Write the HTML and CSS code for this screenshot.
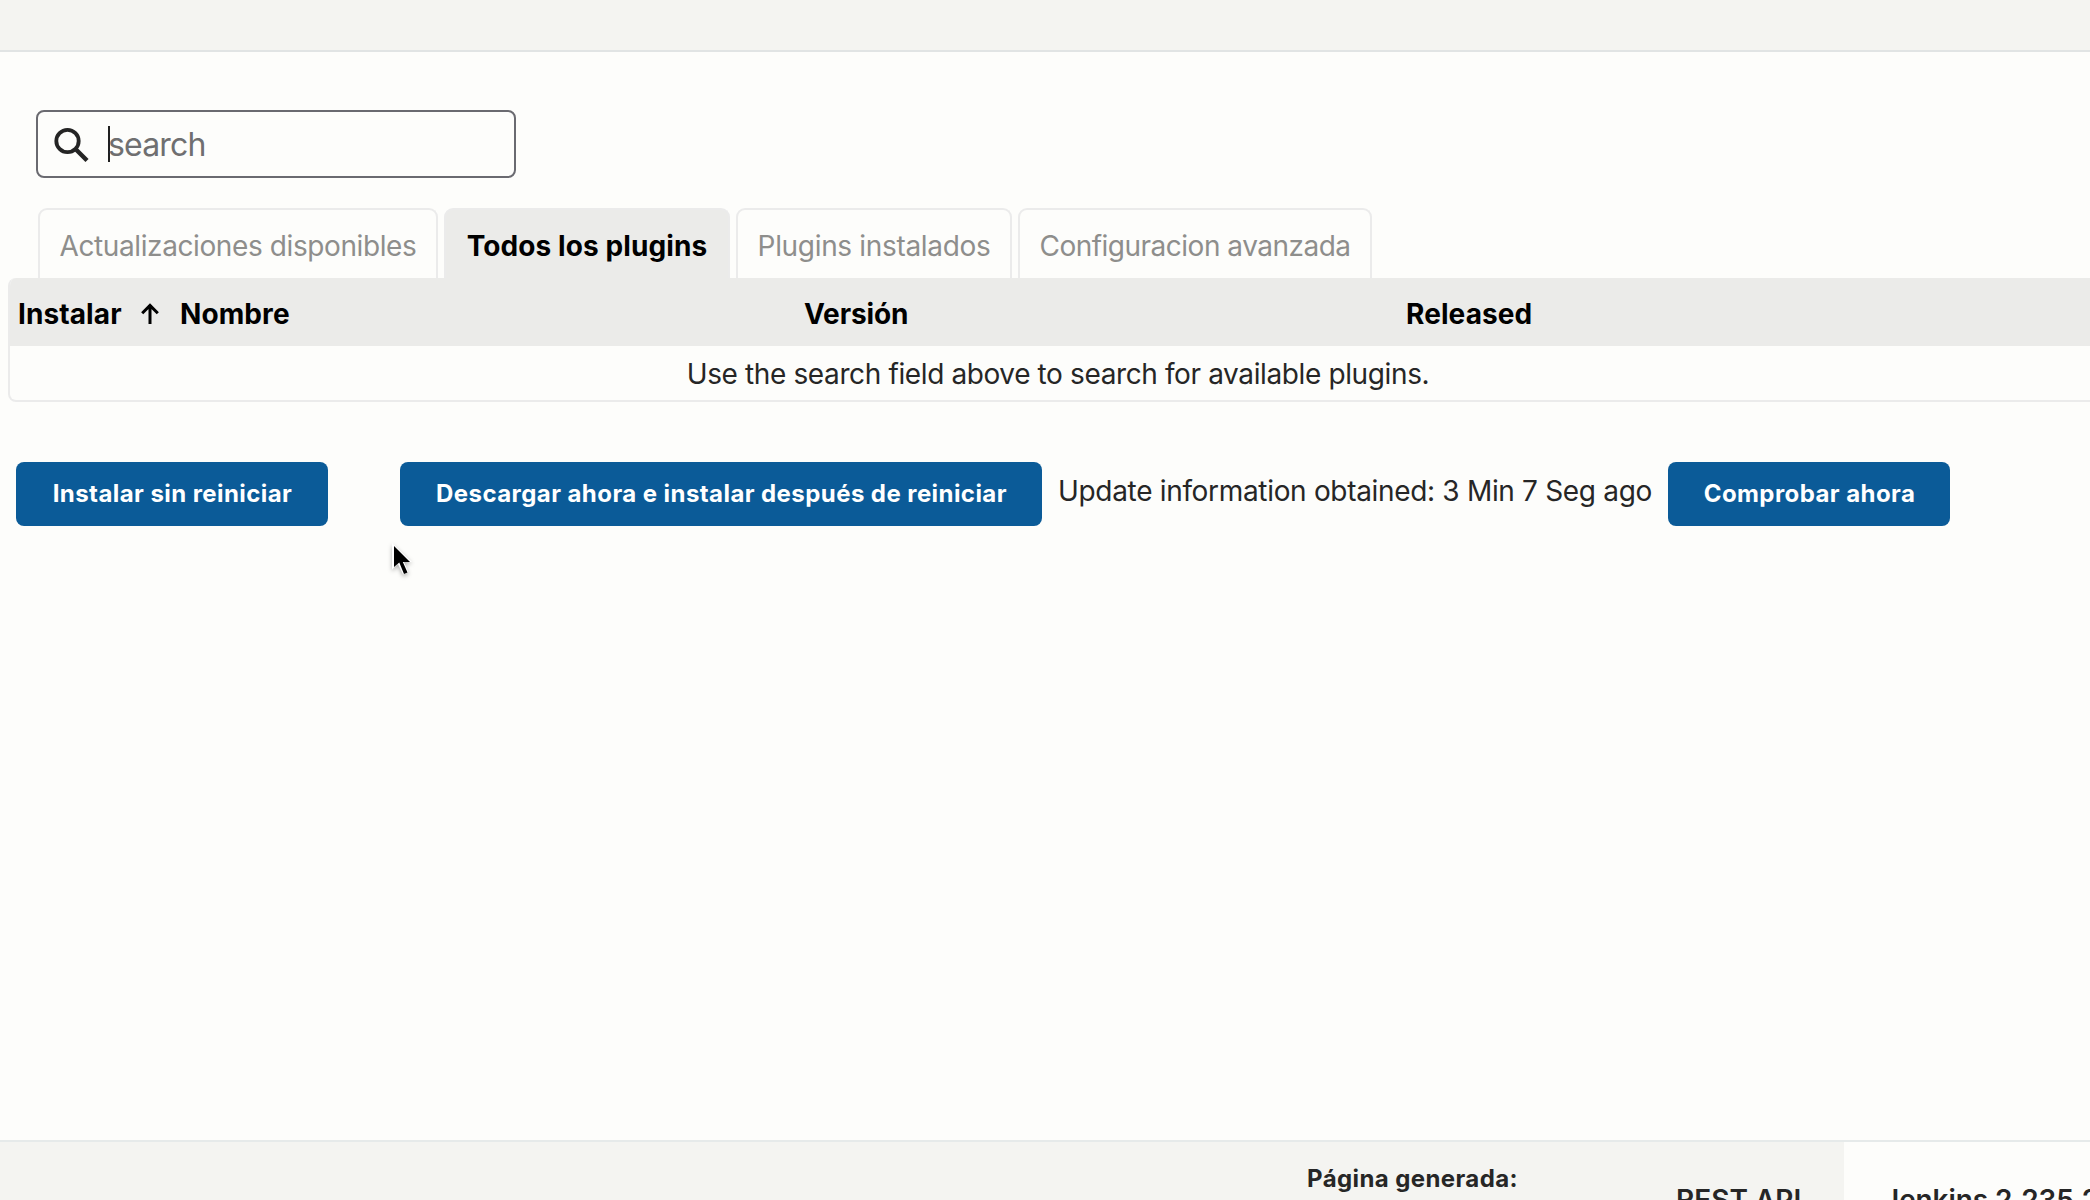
FILE: index.html
```html
<!DOCTYPE html>
<html lang="es">
<head>
<meta charset="utf-8">
<title>Plugins [Jenkins]</title>
<link rel="stylesheet" href="styles.css">
</head>
<body>
<header class="breadcrumbs"></header>
<main class="main">
  <div class="search">
    <svg class="search-icon" viewBox="0 0 36 36" width="36" height="36" fill="none" stroke="#242424" stroke-width="3.800">
      <circle cx="13.500" cy="14" r="11.2"/>
      <path d="M21.500 22 L33 33.500" stroke-width="4.4"/>
    </svg>
    <span class="caret"></span>
    <span class="placeholder">search</span>
  </div>
  <nav class="tabs">
    <a class="tab tab-updates">Actualizaciones disponibles</a>
    <a class="tab tab-all active">Todos los plugins</a>
    <a class="tab tab-installed">Plugins instalados</a>
    <a class="tab tab-advanced">Configuracion avanzada</a>
  </nav>
  <section class="plugins">
    <div class="head">
      <span class="col-install">Instalar
        <svg class="arrow" viewBox="0 0 18 21" width="18" height="21" fill="none" stroke="#000" stroke-width="3"><path d="M9 21V3M1.2 10.2L9 2.4l7.8 7.8"/></svg>
      </span>
      <span class="col-name">Nombre</span>
      <span class="col-version">Versión</span>
      <span>Released</span>
    </div>
    <div class="empty">Use the search field above to search for available plugins.</div>
  </section>
  <div class="actions">
    <button class="btn btn-install">Instalar sin reiniciar</button>
    <button class="btn btn-download">Descargar ahora e instalar después de reiniciar</button>
    <span class="info">Update information obtained: 3 Min 7 Seg ago</span>
    <button class="btn btn-check">Comprobar ahora</button>
  </div>
</main>
<footer class="footer">
  <span class="generated">Página generada:</span>
  <span class="rest">REST API</span>
  <span class="version">Jenkins 2.235.2</span>
</footer>
<svg class="pointer" viewBox="0 0 26 40" width="26" height="40">
  <path d="M4 3V29.5L10 24l5 10.5 5.5-2.3L16 22h8z" fill="#fff"/>
  <path d="M6 6V27L11.300 22.500L16 34l3.500-1.500L14.800 22H22z" fill="#000"/>
</svg>
</body>
</html>
```

FILE: styles.css
```css
* { box-sizing: border-box; }
body {
  margin: 0;
  width: 2090px;
  height: 1200px;
  overflow: hidden;
  display: flex;
  flex-direction: column;
  background: #fdfdfb;
  color: #262626;
  font: 28px/34px "Inter", sans-serif;
  white-space: nowrap;
}
.breadcrumbs {
  flex: none;
  height: 52px;
  background: #f4f4f1;
  border-bottom: 2px solid #e1e4e4;
}
.main { flex: none; height: 1088px; padding-top: 58px; }
.search {
  display: flex;
  align-items: center;
  width: 480px;
  height: 68px;
  margin-left: 36px;
  padding-left: 16px;
  border: 2px solid #6a6a70;
  border-radius: 8px;
}
.search-icon { display: block; margin-top: 2px; }
.caret { width: 2px; height: 36px; margin-left: 18px; background: #202020; }
.placeholder { margin: 2px 0 0 -2px; font-size: 32px; letter-spacing: -.85px; color: #6f6f70; }
.tabs { display: flex; gap: 6px; margin: 30px 0 0 38px; }
.tab {
  height: 70px;
  padding-top: 19px;
  border: 2px solid #ebebeb;
  border-bottom: 0;
  border-radius: 9px 9px 0 0;
  text-align: center;
  color: #8e8e8c;
}
.tab-updates { width: 400px; letter-spacing: -.4px; }
.tab-all { width: 286px; letter-spacing: .1px; }
.tab-installed { width: 276px; letter-spacing: -.33px; }
.tab-advanced { width: 354px; letter-spacing: -.5px; }
.tab.active { background: #ebebe9; color: #000; font-weight: 700; }
.plugins {
  width: 2100px;
  height: 124px;
  margin-left: 8px;
  border: 2px solid #ebebeb;
  border-top: 0;
  border-radius: 8px;
  overflow: hidden;
}
.head {
  display: flex;
  align-items: center;
  height: 68px;
  padding: 3px 0 0 8px;
  background: #ebebe9;
  color: #000;
  font-weight: 700;
  letter-spacing: .1px;
}
.col-install { display: flex; align-items: center; gap: 19px; width: 162px; }
.col-name { width: 624px; }
.col-version { width: 602px; letter-spacing: -.1px; }
.empty { padding-top: 11px; text-align: center; letter-spacing: -.38px; }
.actions { display: flex; margin: 60px 0 0 16px; }
.btn {
  height: 64px;
  padding: 0 0 0 1px;
  border: 0;
  border-radius: 8px;
  background: #0b5b98;
  color: #fff;
  font: 700 24px/64px "Inter", sans-serif;
  letter-spacing: .43px;
}
.btn-install { width: 312px; margin-right: 72px; }
.btn-download { width: 642px; margin-right: 14px; }
.btn-check { width: 282px; }
.info { width: 612px; padding: 12px 0 0 2px; letter-spacing: -.32px; }
.footer {
  display: flex;
  flex: none;
  height: 60px;
  border-top: 2px solid #e6eaea;
  background: #f4f4f1;
  font-weight: 600;
}
.generated { flex: none; width: 1676px; padding: 20px 0 0 1307px; font-size: 24px; font-weight: 700; letter-spacing: .4px; }
.rest { flex: none; width: 168px; padding-top: 41px; }
.version { flex: 1; min-width: 0; padding: 41px 0 0 39px; overflow: hidden; background: #fdfdfb; letter-spacing: -.1px; }
.pointer { position: absolute; left: 388px; top: 540px; filter: drop-shadow(0 2px 2px rgba(0, 0, 0, .3)); }
```
